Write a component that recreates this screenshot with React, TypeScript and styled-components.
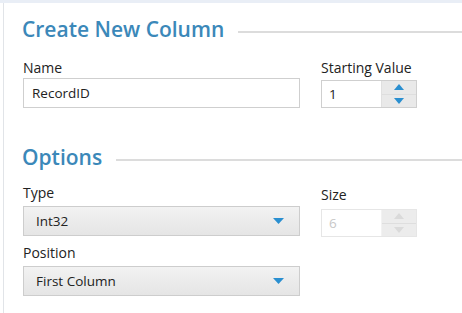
import styled, { createGlobalStyle } from 'styled-components';

const GlobalStyle = createGlobalStyle`
  body {
    margin: 0;
    background: #ffffff;
    font-family: "Open Sans", "Noto Sans", sans-serif;
  }
`;

const Shell = styled.div`
  width: 462px;
  height: 313px;
  box-sizing: border-box;
  border-top: 3px solid #e9eef6;
  overflow: hidden;
`;

const Panel = styled.div`
  height: 100%;
  margin-left: 3px;
  border-left: 1px solid #e1e4e8;
  padding: 12px 0 0 18px;
  box-sizing: border-box;
`;

const Header = styled.div<{ $top?: number }>`
  display: flex;
  align-items: flex-start;
  gap: 14px;
  margin-top: ${({ $top }) => $top ?? 0}px;
  height: 28px;
`;

const Title = styled.h2`
  margin: 0;
  font-size: 21px;
  line-height: 28px;
  font-weight: 600;
  color: #3b88b9;
  white-space: nowrap;
`;

const Rule = styled.div`
  flex: 1;
  height: 2px;
  margin-top: 16px;
  background: #dcdcdc;
`;

const Row = styled.div<{ $top?: number }>`
  display: flex;
  gap: 21px;
  margin-top: ${({ $top }) => $top ?? 0}px;
  padding-left: 1px;
`;

const Field = styled.div<{ $pad?: number }>`
  display: flex;
  flex-direction: column;
  padding-top: ${({ $pad }) => $pad ?? 0}px;
`;

const Label = styled.label<{ $gap?: number; $top?: number }>`
  font-size: 14px;
  line-height: 18px;
  color: #222;
  margin-top: ${({ $top }) => $top ?? 0}px;
  margin-bottom: ${({ $gap }) => $gap ?? 4}px;
`;

const TextBox = styled.div`
  width: 277px;
  height: 30px;
  box-sizing: border-box;
  border: 1px solid #cfcfcf;
  background: #fff;
  display: flex;
  align-items: center;
  padding-left: 8px;
  font-size: 13.5px;
  color: #222;
`;

const Spinner = styled.div<{ $disabled?: boolean }>`
  width: 96px;
  height: 28px;
  box-sizing: border-box;
  border: 1px solid ${({ $disabled }) => ($disabled ? '#e6e6e6' : '#cfcfcf')};
  display: flex;
  background: #fff;
`;

const SpinValue = styled.div<{ $disabled?: boolean }>`
  flex: 1;
  display: flex;
  align-items: center;
  padding-left: 7px;
  font-size: 13.5px;
  color: ${({ $disabled }) => ($disabled ? '#c8c8c8' : '#222')};
`;

const SpinButtons = styled.div<{ $disabled?: boolean }>`
  width: 34px;
  display: flex;
  flex-direction: column;
  background: ${({ $disabled }) => ($disabled ? '#ececec' : '#e9e9e9')};
  border-left: 1px solid ${({ $disabled }) => ($disabled ? '#f2f2f2' : '#e0e0e0')};
`;

const SpinButton = styled.div`
  flex: 1;
  display: flex;
  align-items: center;
  justify-content: center;
  & + & {
    border-top: 1px solid #dedede;
  }
`;

const Select = styled.div`
  width: 277px;
  height: 30px;
  box-sizing: border-box;
  border: 1px solid #cdcdcd;
  background: linear-gradient(#f2f2f2, #e5e5e5);
  display: flex;
  align-items: center;
  justify-content: space-between;
  padding: 0 15px 0 12px;
  font-size: 13.5px;
  color: #222;
`;

const Arrow = ({ up, color, w = 11 }: { up?: boolean; color: string; w?: number }) => (
  <svg width={w} height="6" viewBox="0 0 12 6" preserveAspectRatio="none">
    <path d={up ? 'M0 6 L6 0 L12 6 Z' : 'M0 0 L12 0 L6 6 Z'} fill={color} />
  </svg>
);

const App = () => {
  return (
    <>
      <GlobalStyle />
      <Shell>
        <Panel>
          <Header>
            <Title>Create New Column</Title>
            <Rule />
          </Header>
          <Row $top={16}>
            <Field>
              <Label $gap={1}>Name</Label>
              <TextBox>RecordID</TextBox>
            </Field>
            <Field>
              <Label $gap={3}>Starting Value</Label>
              <Spinner>
                <SpinValue>1</SpinValue>
                <SpinButtons>
                  <SpinButton>
                    <Arrow up w={10} color="#2a8fd0" />
                  </SpinButton>
                  <SpinButton>
                    <Arrow w={10} color="#2a8fd0" />
                  </SpinButton>
                </SpinButtons>
              </Spinner>
            </Field>
          </Row>
          <Header $top={35}>
            <Title>Options</Title>
            <Rule />
          </Header>
          <Row $top={13}>
            <Field>
              <Label>Type</Label>
              <Select>
                Int32
                <Arrow color="#2a8fd0" />
              </Select>
              <Label $top={8}>Position</Label>
              <Select>
                First Column
                <Arrow color="#2a8fd0" />
              </Select>
            </Field>
            <Field $pad={2}>
              <Label $gap={5}>Size</Label>
              <Spinner $disabled>
                <SpinValue $disabled>6</SpinValue>
                <SpinButtons $disabled>
                  <SpinButton>
                    <Arrow up w={10} color="#dadada" />
                  </SpinButton>
                  <SpinButton>
                    <Arrow w={10} color="#dadada" />
                  </SpinButton>
                </SpinButtons>
              </Spinner>
            </Field>
          </Row>
        </Panel>
      </Shell>
    </>
  );
};

export default App;
